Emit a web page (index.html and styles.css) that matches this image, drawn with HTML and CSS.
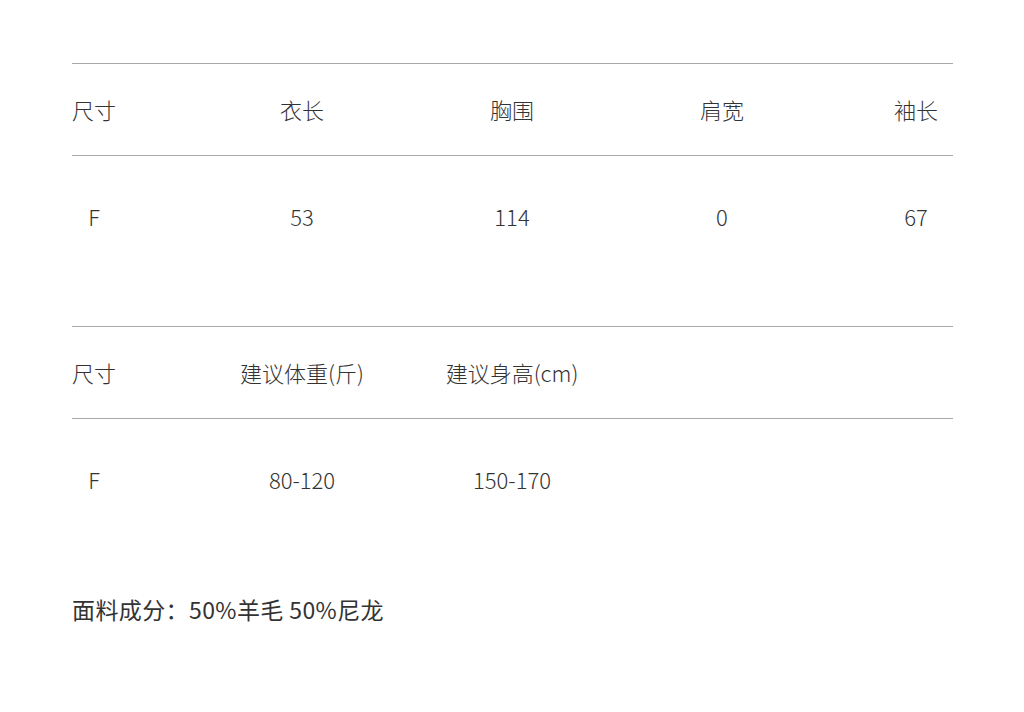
FILE: index.html
```html
<!DOCTYPE html>
<html lang="zh-CN">
<head>
<meta charset="utf-8">
<title>尺码表</title>
<link rel="stylesheet" href="styles.css">
</head>
<body>
<main class="page">
  <section class="size-table">
    <div class="row head">
      <div class="cell"><span>尺寸</span></div>
      <div class="cell"><span>衣长</span></div>
      <div class="cell"><span>胸围</span></div>
      <div class="cell"><span>肩宽</span></div>
      <div class="cell"><span>袖长</span></div>
    </div>
    <div class="row data">
      <div class="cell"><span>F</span></div>
      <div class="cell"><span>53</span></div>
      <div class="cell"><span>114</span></div>
      <div class="cell"><span>0</span></div>
      <div class="cell"><span>67</span></div>
    </div>
  </section>
  <section class="size-table second">
    <div class="row head">
      <div class="cell"><span>尺寸</span></div>
      <div class="cell"><span>建议体重(斤)</span></div>
      <div class="cell"><span>建议身高(cm)</span></div>
      <div class="cell"></div>
      <div class="cell"></div>
    </div>
    <div class="row data">
      <div class="cell"><span>F</span></div>
      <div class="cell"><span>80-120</span></div>
      <div class="cell"><span>150-170</span></div>
      <div class="cell"></div>
      <div class="cell"></div>
    </div>
  </section>
  <p class="fabric">面料成分：50%羊毛 50%尼龙</p>
</main>
</body>
</html>
```

FILE: styles.css
```css
html, body {
  margin: 0;
  padding: 0;
  background: #ffffff;
}

body {
  font-family: "Noto Sans CJK SC", "Noto Sans", sans-serif;
  color: #333333;
}

.page {
  width: 881px;
  padding: 63px 0 0 72px;
}

.size-table {
  border-top: 1px solid #a8a8a8;
}

.size-table.second {
  margin-top: 50px;
}

.row {
  display: grid;
  grid-template-columns: 208px 210px 210px 194px 59px;
  align-items: center;
}

.row.head {
  height: 89px;
  padding-bottom: 2px;
  border-bottom: 1px solid #a8a8a8;
}

.row.data {
  height: 120px;
}

.cell {
  width: 44px;
  display: flex;
  justify-content: center;
  white-space: nowrap;
  font-size: 22px;
  font-weight: 300;
  line-height: 30px;
}

.fabric {
  margin: 55px 0 0;
  font-size: 23px;
  letter-spacing: 0.4px;
  line-height: 30px;
  color: #333333;
}
```
